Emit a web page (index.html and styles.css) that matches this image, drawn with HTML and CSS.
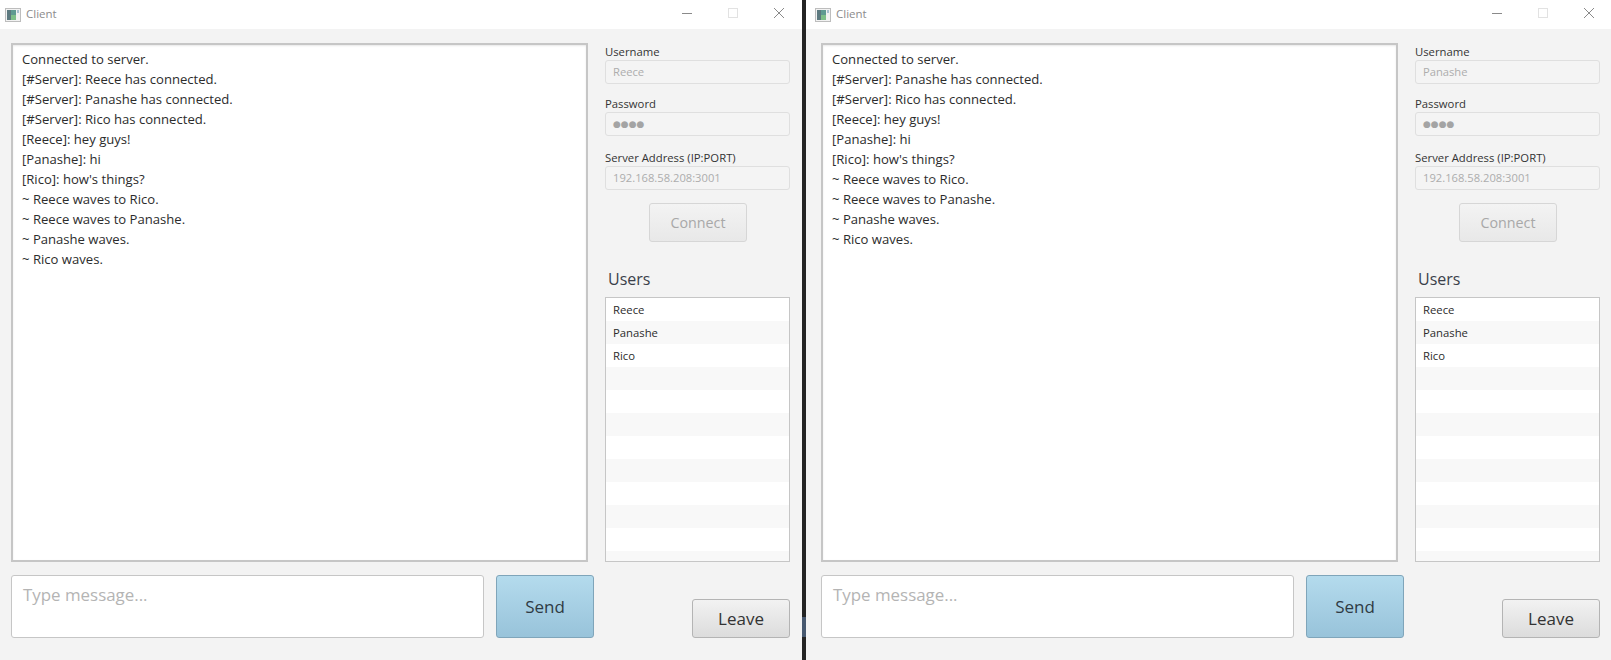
FILE: index.html

```html
<!DOCTYPE html>
<html lang="en">
<head>
    <meta charset="UTF-8">
    <title>Client</title>
    <link rel="stylesheet" href="styles.css">
</head>
<body>

<div class="desktop">

    <div class="window window-first">
        <div class="titlebar">
            <svg class="app-icon" width="16" height="14" viewBox="0 0 16 14">
                <rect x="0.5" y="0.5" width="15" height="13" fill="#f2f2f2" stroke="#bdbdbd"/>
                <rect x="2" y="2" width="9" height="10" fill="#5f9a92"/>
                <rect x="2" y="2" width="4" height="10" fill="#5d7a80"/>
                <rect x="6" y="7" width="5" height="5" fill="#7fbf8a"/>
                <rect x="12" y="2" width="2" height="3" fill="#a9c0d2"/>
            </svg>
            <span class="title-text">Client</span>
            <div class="title-buttons">
                <svg class="title-btn" width="46" height="29" viewBox="0 0 46 29"><path d="M18 13.5H28" stroke="#8a8a8a" fill="none"/></svg>
                <svg class="title-btn" width="46" height="29" viewBox="0 0 46 29"><rect x="18.5" y="8.5" width="9" height="9" stroke="#e2e2e2" fill="none"/></svg>
                <svg class="title-btn" width="46" height="29" viewBox="0 0 46 29"><path d="M18 8L28 18M28 8L18 18" stroke="#8a8a8a" fill="none"/></svg>
            </div>
        </div>
        <div class="content">
            <div class="left-col">
                <div class="chat-log">
                    <p>Connected to server.</p>
                    <p>[#Server]: Reece has connected.</p>
                    <p>[#Server]: Panashe has connected.</p>
                    <p>[#Server]: Rico has connected.</p>
                    <p>[Reece]: hey guys!</p>
                    <p>[Panashe]: hi</p>
                    <p>[Rico]: how's things?</p>
                    <p>~ Reece waves to Rico.</p>
                    <p>~ Reece waves to Panashe.</p>
                    <p>~ Panashe waves.</p>
                    <p>~ Rico waves.</p>
                </div>
                <div class="send-row">
                    <div class="message-box">Type message...</div>
                    <div class="btn btn-send">Send</div>
                </div>
            </div>
            <div class="side-col">
                <div class="field-label">Username</div>
                <div class="field">Reece</div>
                <div class="field-label">Password</div>
                <div class="field field-dots">●●●●</div>
                <div class="field-label label-server">Server Address (IP:PORT)</div>
                <div class="field">192.168.58.208:3001</div>
                <div class="btn btn-connect">Connect</div>
                <div class="users-heading">Users</div>
                <div class="user-list">
                    <div class="user-row">Reece</div>
                    <div class="user-row">Panashe</div>
                    <div class="user-row">Rico</div>
                    <div class="user-row"></div>
                    <div class="user-row"></div>
                    <div class="user-row"></div>
                    <div class="user-row"></div>
                    <div class="user-row"></div>
                    <div class="user-row"></div>
                    <div class="user-row"></div>
                    <div class="user-row"></div>
                    <div class="user-row"></div>
                </div>
                <div class="btn btn-leave">Leave</div>
            </div>
        </div>
    </div>

    <div class="divider"></div>

    <div class="window window-second">
        <div class="titlebar">
            <svg class="app-icon" width="16" height="14" viewBox="0 0 16 14">
                <rect x="0.5" y="0.5" width="15" height="13" fill="#f2f2f2" stroke="#bdbdbd"/>
                <rect x="2" y="2" width="9" height="10" fill="#5f9a92"/>
                <rect x="2" y="2" width="4" height="10" fill="#5d7a80"/>
                <rect x="6" y="7" width="5" height="5" fill="#7fbf8a"/>
                <rect x="12" y="2" width="2" height="3" fill="#a9c0d2"/>
            </svg>
            <span class="title-text">Client</span>
            <div class="title-buttons">
                <svg class="title-btn" width="46" height="29" viewBox="0 0 46 29"><path d="M18 13.5H28" stroke="#8a8a8a" fill="none"/></svg>
                <svg class="title-btn" width="46" height="29" viewBox="0 0 46 29"><rect x="18.5" y="8.5" width="9" height="9" stroke="#e2e2e2" fill="none"/></svg>
                <svg class="title-btn" width="46" height="29" viewBox="0 0 46 29"><path d="M18 8L28 18M28 8L18 18" stroke="#8a8a8a" fill="none"/></svg>
            </div>
        </div>
        <div class="content">
            <div class="left-col">
                <div class="chat-log">
                    <p>Connected to server.</p>
                    <p>[#Server]: Panashe has connected.</p>
                    <p>[#Server]: Rico has connected.</p>
                    <p>[Reece]: hey guys!</p>
                    <p>[Panashe]: hi</p>
                    <p>[Rico]: how's things?</p>
                    <p>~ Reece waves to Rico.</p>
                    <p>~ Reece waves to Panashe.</p>
                    <p>~ Panashe waves.</p>
                    <p>~ Rico waves.</p>
                </div>
                <div class="send-row">
                    <div class="message-box">Type message...</div>
                    <div class="btn btn-send">Send</div>
                </div>
            </div>
            <div class="side-col">
                <div class="field-label">Username</div>
                <div class="field">Panashe</div>
                <div class="field-label">Password</div>
                <div class="field field-dots">●●●●</div>
                <div class="field-label label-server">Server Address (IP:PORT)</div>
                <div class="field">192.168.58.208:3001</div>
                <div class="btn btn-connect">Connect</div>
                <div class="users-heading">Users</div>
                <div class="user-list">
                    <div class="user-row">Reece</div>
                    <div class="user-row">Panashe</div>
                    <div class="user-row">Rico</div>
                    <div class="user-row"></div>
                    <div class="user-row"></div>
                    <div class="user-row"></div>
                    <div class="user-row"></div>
                    <div class="user-row"></div>
                    <div class="user-row"></div>
                    <div class="user-row"></div>
                    <div class="user-row"></div>
                    <div class="user-row"></div>
                </div>
                <div class="btn btn-leave">Leave</div>
            </div>
        </div>
    </div>

</div>

</body>
</html>
```

FILE: styles.css

```css
html, body {
    margin: 0;
    padding: 0;
    height: 660px;
    overflow: hidden;
}

body {
    font-family: "Open Sans", "Liberation Sans", sans-serif;
    color: #333;
    background-color: #f3f3f3;
}

.desktop {
    display: flex;
    width: 1611px;
    height: 660px;
    overflow: hidden;
}

.window {
    flex: none;
    height: 660px;
    overflow: hidden;
    background-color: #f3f3f3;
}

.window-first {
    width: 802px;
    --edge: 0px;
}

.window-second {
    width: 806px;
    --edge: 4px;
}

.divider {
    flex: none;
    width: 4px;
    background: linear-gradient(#242424 617px, #47586f 617px, #47586f 637px, #242424 637px);
}

/* title bar */

.titlebar {
    display: flex;
    align-items: center;
    height: 29px;
    padding-left: calc(5px + var(--edge));
    background-color: white;
}

.app-icon {
    flex: none;
}

.title-text {
    margin-left: 5px;
    padding-bottom: 2px;
    font-size: 11.5px;
    color: #8c8c8c;
}

.title-buttons {
    display: flex;
    margin-left: auto;
}

/* main area */

.content {
    display: flex;
    gap: 11px;
    padding: 14px 0 0 calc(11px + var(--edge));
}

.left-col {
    width: 583px;
}

.chat-log {
    box-sizing: border-box;
    width: 577px;
    height: 519px;
    padding: 4px 9px;
    background-color: white;
    border: 2px solid #c6c6c6;
    box-shadow: inset 0 1px 2px #e8e8e8;
}

.chat-log p {
    margin: 0;
    font-size: 13.1px;
    line-height: 20px;
    color: #2c2c2c;
}

.send-row {
    display: flex;
    gap: 12px;
    margin-top: 13px;
}

.message-box {
    box-sizing: border-box;
    width: 473px;
    height: 63px;
    padding: 7px 11px;
    background-color: white;
    border: 1px solid #c6c6c6;
    border-radius: 3px;
    font-size: 16.9px;
    line-height: 24px;
    color: #b4b4b4;
}

.btn {
    box-sizing: border-box;
    display: flex;
    align-items: center;
    justify-content: center;
    width: 98px;
    border-radius: 3px;
    font-size: 17px;
}

.btn-send {
    height: 63px;
    border: 1px solid #7fa5ba;
    background: linear-gradient(#b4dbed, #98c3da);
    color: #2f3b44;
}

.btn-connect {
    height: 39px;
    margin: 13px 0 0 44px;
    border: 1px solid #d6d6d6;
    background: linear-gradient(#f3f3f3, #e8e8e8);
    font-size: 14.3px;
    color: #a8a8a8;
}

.btn-leave {
    height: 39px;
    margin: 37px 0 0 87px;
    border: 1px solid #b4b4b4;
    background: linear-gradient(#f2f2f2, #dcdcdc);
    color: #333;
}

/* side column */

.side-col {
    width: 185px;
}

.field-label {
    height: 17px;
    font-size: 11.3px;
    line-height: 18px;
    color: #333;
}

.field-label + .field + .field-label {
    margin-top: 11px;
}

.field-label + .field + .field-label.label-server {
    margin-top: 13px;
}

.field {
    box-sizing: border-box;
    height: 24px;
    padding: 0 7px;
    background-color: #f4f4f4;
    border: 1px solid #dfdfdf;
    border-radius: 3px;
    font-size: 11.2px;
    line-height: 22px;
    color: #adadad;
}

.field-dots {
    font-family: "DejaVu Sans", sans-serif;
    font-size: 9px;
    color: #a4a4a4;
}

.users-heading {
    height: 25px;
    margin: 25px 0 0 3px;
    font-size: 16px;
    line-height: 25px;
    color: #3a3f4a;
}

.user-list {
    box-sizing: border-box;
    height: 265px;
    margin-top: 5px;
    overflow: hidden;
    background-color: white;
    border: 1px solid #c6c6c6;
}

.user-row {
    height: 23px;
    padding-left: 7px;
    font-size: 11.3px;
    line-height: 23px;
    color: #2c2c2c;
}

.user-row:nth-child(even) {
    background-color: #f8f8f8;
}
```
